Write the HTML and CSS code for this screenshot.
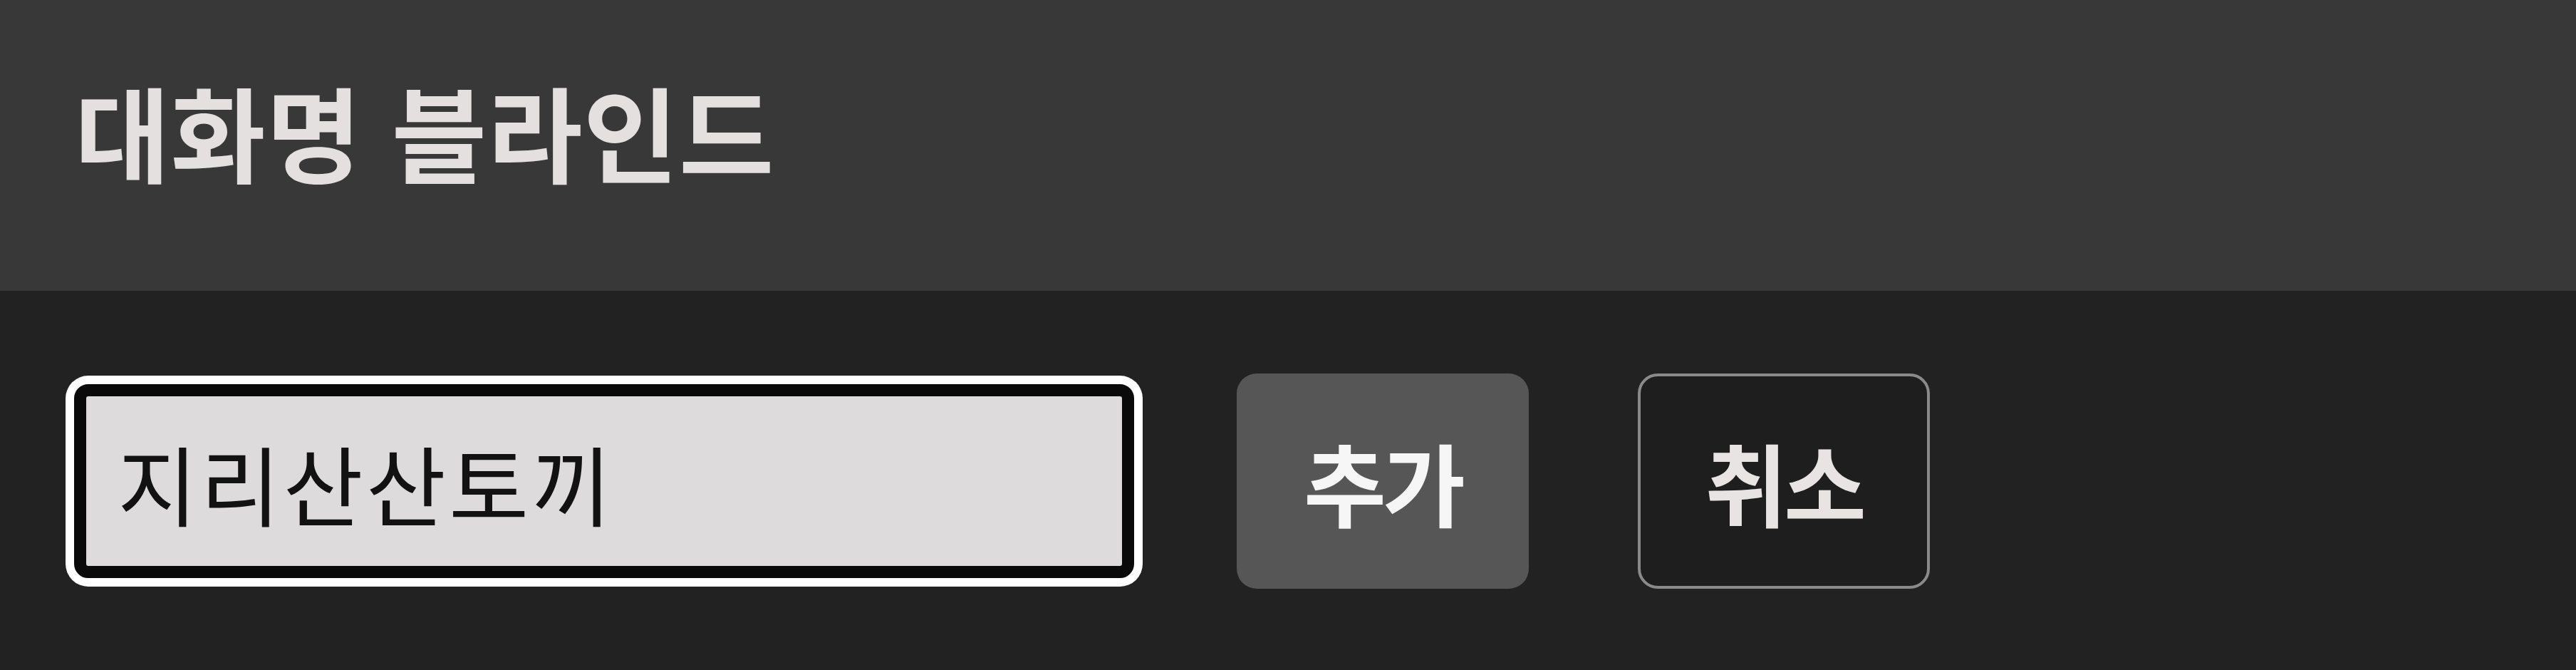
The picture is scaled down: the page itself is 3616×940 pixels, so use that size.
FILE: index.html
```html
<!DOCTYPE html>
<html lang="ko">
<head>
    <meta charset="UTF-8">
    <meta name="viewport" content="width=device-width, initial-scale=1.0">
    <title>대화명 블라인드</title>
    <link rel="stylesheet" href="styles.css">
</head>
<body>
    <header class="top">
        <h1 class="title">대화명 블라인드</h1>
    </header>
    <div class="row">
        <input class="name-input" type="text" value="지리산산토끼">
        <button class="btn btn-add" type="button">추가</button>
        <button class="btn btn-cancel" type="button">취소</button>
    </div>
</body>
</html>
```

FILE: styles.css
```css
@charset "utf-8";
* {
    margin: 0;
    padding: 0;
    box-sizing: border-box;
    font-family: "Noto Sans CJK KR", "Noto Sans", sans-serif;
}
body {
    background-color: #222222;
    min-height: 100vh;
}
.top {
    height: 408px;
    background-color: #383838;
    padding: 93px 0 0 105px;
}
.title {
    font-size: 145px;
    line-height: 180px;
    font-weight: 700;
    color: #e4e0e0;
    letter-spacing: 1px;
}
.row {
    display: flex;
    align-items: center;
    padding: 116px 0 0 104px;
}
.name-input {
    width: 1488px;
    height: 272px;
    border: 17px solid #0a0a0a;
    border-radius: 20px;
    box-shadow: 0 0 0 12px #ffffff;
    background-color: #dddbdc;
    color: #121212;
    font-size: 122px;
    letter-spacing: 4px;
    padding: 0 0 0 44px;
    outline: none;
}
.btn {
    width: 410px;
    height: 302px;
    border-radius: 28px;
    font-size: 126px;
    font-weight: 700;
    letter-spacing: -5px;
    cursor: pointer;
}
.btn-add {
    margin-left: 144px;
    background-color: #565656;
    border: none;
    color: #f6f6f6;
}
.btn-cancel {
    margin-left: 153px;
    background-color: #1e1e1e;
    border: 4px solid #8a8a8a;
    color: #e8e4e4;
}
```
